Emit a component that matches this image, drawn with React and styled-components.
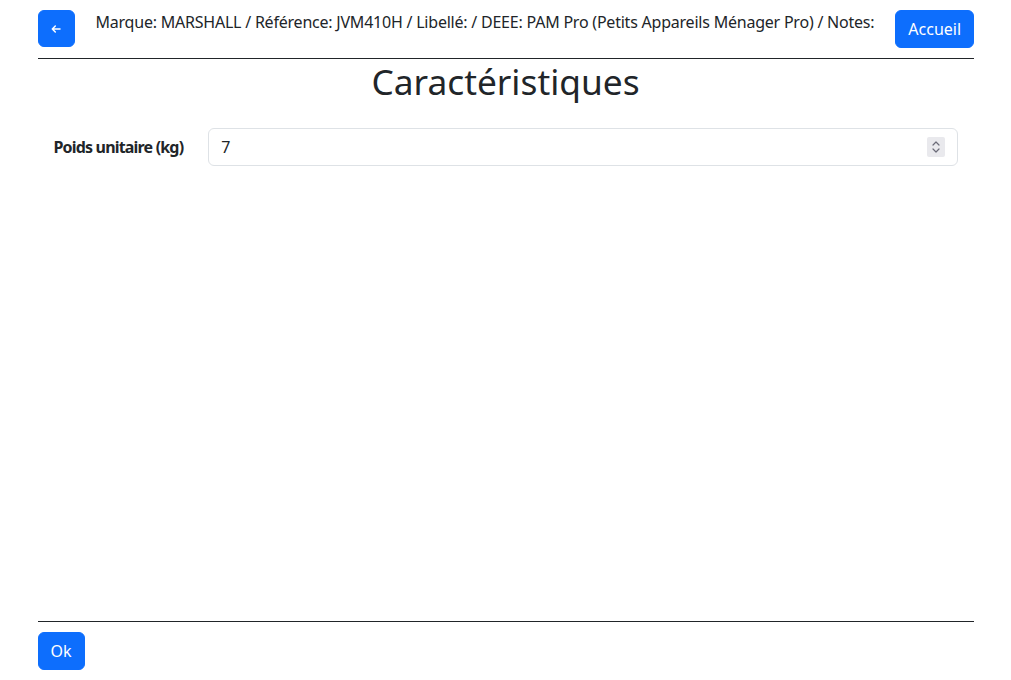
import React, { useState } from 'react';
import styled, { createGlobalStyle } from 'styled-components';

const Global = createGlobalStyle`
  * { box-sizing: border-box; }
  html, body { margin: 0; height: 100%; background: #fff; }
  body {
    font-family: "Noto Sans", "Open Sans", sans-serif;
    font-size: 16px;
    line-height: 1.5;
    color: #212529;
  }
  #root { height: 100%; }
`;

const Page = styled.div`
  max-width: 960px;
  height: 100%;
  margin: 0 auto;
  padding: 10px 12px;
  display: flex;
  flex-direction: column;
`;

const Header = styled.header`
  display: flex;
  align-items: flex-start;
  gap: 21px;
`;

const Button = styled.button`
  font-family: inherit;
  font-size: 16px;
  line-height: 24px;
  height: ${p => (p.$icon ? '37px' : '38px')};
  width: ${p => (p.$icon ? '37px' : 'auto')};
  color: #fff;
  background: #0d6efd;
  border: 1px solid #0d6efd;
  border-radius: 6px;
  padding: ${p => (p.$icon ? '0' : '6px 12px')};
  display: inline-flex;
  align-items: center;
  justify-content: center;
  cursor: pointer;
  flex-shrink: 0;
  &:hover { background: #0b5ed7; }
`;

const Info = styled.p`
  flex: 1;
  margin: 0;
  line-height: 24px;
  white-space: nowrap;
  letter-spacing: -0.22px;
`;

const Rule = styled.hr`
  margin: ${p => p.$m || '10px 0 0'};
  border: 0;
  border-top: 1px solid #212529;
  width: 100%;
`;

const Title = styled.h1`
  margin: 1px 0 10px;
  font-size: 35.3px;
  font-weight: 400;
  line-height: 1.2;
  text-align: center;
`;

const Body = styled.main`
  flex: 1;
  padding: 16px;
`;

const FieldRow = styled.div`
  display: grid;
  grid-template-columns: 130.67px 1fr;
  column-gap: 24px;
  align-items: center;
`;

const Label = styled.label`
  font-weight: 700;
  white-space: nowrap;
  letter-spacing: -0.82px;
`;

const InputWrap = styled.div`
  position: relative;
`;

const Input = styled.input`
  font-family: inherit;
  font-size: 16px;
  line-height: 24px;
  color: #212529;
  padding: 6px 40px 6px 12px;
  border: 1px solid #dee2e6;
  border-radius: 6px;
  width: 100%;
  outline: none;
  -moz-appearance: textfield;
  &::-webkit-inner-spin-button,
  &::-webkit-outer-spin-button { -webkit-appearance: none; margin: 0; }
`;

const Spin = styled.span`
  position: absolute;
  right: 13px;
  top: 9px;
  width: 18px;
  height: 20px;
  background: #e9e9ed;
  border-radius: 2px;
  display: flex;
  align-items: center;
  justify-content: center;
  pointer-events: none;
  color: #6b6b78;
`;

const Footer = styled.footer`
  padding-top: 10px;
`;

const ArrowLeft = () => (
  <svg width="10" height="10" viewBox="0 0 10 10" fill="none" stroke="currentColor" strokeWidth="1.5" strokeLinecap="round" strokeLinejoin="round">
    <path d="M9 5H1.3M4.3 2L1.3 5L4.3 8" />
  </svg>
);

const SpinIcon = () => (
  <svg width="10" height="14" viewBox="0 0 10 14" fill="none" stroke="currentColor" strokeWidth="1.2" strokeLinecap="round" strokeLinejoin="round">
    <path d="M2 5L5 2L8 5M2 9L5 12L8 9" />
  </svg>
);

export default function App() {
  const [poids, setPoids] = useState('7');
  return (
    <>
      <Global />
      <Page>
        <Header>
          <Button $icon aria-label="Retour"><ArrowLeft /></Button>
          <Info>Marque: MARSHALL / Référence: JVM410H / Libellé: / DEEE: PAM Pro (Petits Appareils Ménager Pro) / Notes:</Info>
          <Button>Accueil</Button>
        </Header>
        <Rule />
        <Title>Caractéristiques</Title>
        <Body>
          <FieldRow>
            <Label htmlFor="poids">Poids unitaire (kg)</Label>
            <InputWrap>
              <Input id="poids" type="number" value={poids} onChange={e => setPoids(e.target.value)} />
              <Spin><SpinIcon /></Spin>
            </InputWrap>
          </FieldRow>
        </Body>
        <Rule $m="0" />
        <Footer>
          <Button>Ok</Button>
        </Footer>
      </Page>
    </>
  );
}
